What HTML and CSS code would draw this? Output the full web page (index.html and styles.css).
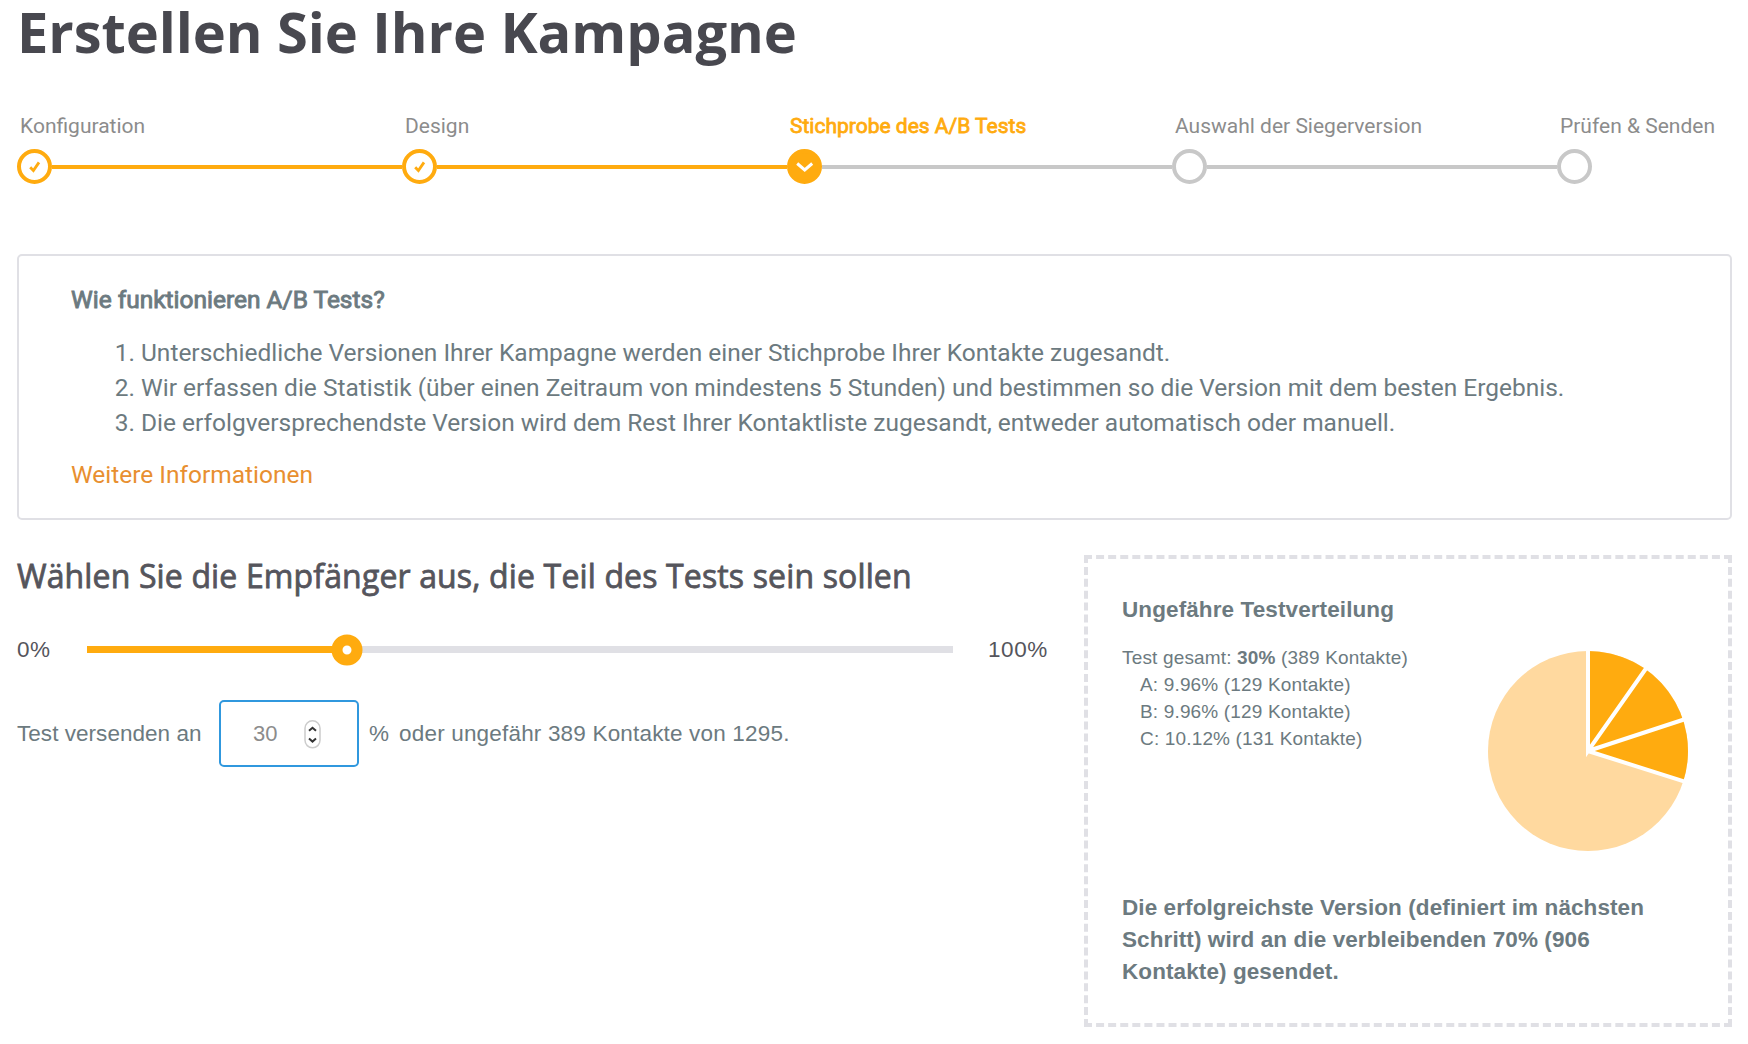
FILE: index.html
```html
<!DOCTYPE html>
<html lang="de">
<head>
    <meta charset="UTF-8">
    <meta name="viewport" content="width=device-width, initial-scale=1.0">
    <title>Erstellen Sie Ihre Kampagne</title>
    <link rel="stylesheet" href="styles.css">
</head>
<body>
    <h1 class="page-title">Erstellen Sie Ihre Kampagne</h1>

    <!-- Progress steps -->
    <div class="steps">
        <div class="step done">
            <span class="step-label">Konfiguration</span>
            <div class="step-track">
                <div class="dot"><svg width="12" height="12" viewBox="0 0 12 12"><path d="M1.2 6.3 L4.4 9.6 L10 1.4"/></svg></div>
            </div>
        </div>
        <div class="step done">
            <span class="step-label">Design</span>
            <div class="step-track">
                <div class="dot"><svg width="12" height="12" viewBox="0 0 12 12"><path d="M1.2 6.3 L4.4 9.6 L10 1.4"/></svg></div>
            </div>
        </div>
        <div class="step current">
            <span class="step-label">Stichprobe des A/B Tests</span>
            <div class="step-track">
                <div class="dot"><svg width="18" height="12" viewBox="0 0 18 12"><path d="M1.2 2.5 L8.7 9 L16.2 2.5"/></svg></div>
            </div>
        </div>
        <div class="step">
            <span class="step-label">Auswahl der Siegerversion</span>
            <div class="step-track"><div class="dot"></div></div>
        </div>
        <div class="step last">
            <span class="step-label">Prüfen &amp; Senden</span>
            <div class="step-track"><div class="dot"></div></div>
        </div>
    </div>

    <!-- Info box -->
    <div class="info-box">
        <h4>Wie funktionieren A/B Tests?</h4>
        <ol>
            <li>Unterschiedliche Versionen Ihrer Kampagne werden einer Stichprobe Ihrer Kontakte zugesandt.</li>
            <li>Wir erfassen die Statistik (über einen Zeitraum von mindestens 5 Stunden) und bestimmen so die Version mit dem besten Ergebnis.</li>
            <li>Die erfolgversprechendste Version wird dem Rest Ihrer Kontaktliste zugesandt, entweder automatisch oder manuell.</li>
        </ol>
        <a href="#">Weitere Informationen</a>
    </div>

    <div class="columns">
        <!-- Recipients -->
        <div class="recipients">
            <h2>Wählen Sie die Empfänger aus, die Teil des Tests sein sollen</h2>
            <div class="slider-row">
                <span class="slider-min">0%</span>
                <div class="slider">
                    <div class="slider-fill" style="width: 30%"></div>
                    <div class="slider-handle" style="left: 30%"></div>
                </div>
                <span class="slider-max">100%</span>
            </div>
            <div class="amount-row">
                <span class="amount-label">Test versenden an</span>
                <div class="amount-input">
                    <span>30</span>
                    <svg class="spinner" width="17" height="30" viewBox="0 0 17 30"><rect x="1" y="1.8" width="15" height="27" rx="7.5"/><path d="M5 11.8 L8.5 8.8 L12 11.8 M5 19.6 L8.5 22.6 L12 19.6"/></svg>
                </div>
                <span class="percent">%</span>
                <span class="amount-text">oder ungefähr 389 Kontakte von 1295.</span>
            </div>
        </div>

        <!-- Test distribution -->
        <div class="distribution">
            <h3>Ungefähre Testverteilung</h3>
            <div class="distribution-body">
                <div class="shares">
                    <p>Test gesamt: <b>30%</b> (389 Kontakte)</p>
                    <p class="version">A: 9.96% (129 Kontakte)</p>
                    <p class="version">B: 9.96% (129 Kontakte)</p>
                    <p class="version">C: 10.12% (131 Kontakte)</p>
                </div>
                <svg class="pie" width="200" height="200" viewBox="-100 -100 200 200">
                    <circle class="pie-rest" r="100"/>
                    <path class="pie-test" d="M0 0 L0 -100 A100 100 0 0 1 95.3 30.2 Z"/>
                    <path class="pie-gap" d="M0 -102 L0 0 L58 -82.5 M0 0 L97.5 -32 M0 0 L97.5 30.9"/>
                </svg>
            </div>
            <p class="winner">Die erfolgreichste Version (definiert im nächsten Schritt) wird an die verbleibenden 70% (906 Kontakte) gesendet.</p>
        </div>
    </div>
</body>
</html>
```
FILE: styles.css
```css
* {
    margin: 0;
    padding: 0;
    box-sizing: border-box;
}
body {
    font-family: "Liberation Sans", Arial, sans-serif;
    font-size: 22px;
    line-height: 32px;
    color: #6c7a80;
    background-color: #fff;
    padding: 1px 16px 0 17px;
}

.page-title {
    font-family: "Open Sans", sans-serif;
    font-size: 56px;
    line-height: 60px;
    font-weight: 700;
    letter-spacing: -0.06px;
    color: #48484f;
}

/* Progress steps */
.steps {
    display: grid;
    grid-template-columns: repeat(4, 385px) auto;
    margin-top: 53px;
}

.step-label {
    display: block;
    font-family: Roboto, sans-serif;
    font-size: 21px;
    line-height: 24px;
    color: #8c8c8c;
    padding-left: 3px;
    white-space: nowrap;
}

.step-track {
    display: flex;
    align-items: center;
    height: 35px;
    margin-top: 11px;
}

.step-track::after {
    content: "";
    flex: 1;
    height: 4px;
    background: #c8c8c8;
}

.dot {
    display: flex;
    align-items: center;
    justify-content: center;
    width: 35px;
    height: 35px;
    border: 4px solid #c8c8c8;
    border-radius: 50%;
}

.dot svg {
    fill: none;
    stroke: #ffab0f;
    stroke-width: 2.8;
}

.done .dot {
    border-color: #ffab0f;
}

.done .step-track::after {
    background: #ffab0f;
}

.current .dot {
    background: #ffab0f;
    border-color: #ffab0f;
}

.current .dot svg {
    stroke: #fff;
    stroke-width: 3;
}

.current .step-label {
    color: #ffab0f;
    -webkit-text-stroke: 0.8px #ffab0f;
}

.last .step-track::after {
    display: none;
}

/* Info box */
.info-box {
    margin-top: 70px;
    padding: 26px 52px 26px;
    border: 2px solid #e0e0e5;
    border-radius: 5px;
    font-family: Roboto, sans-serif;
    font-size: 24.48px;
    line-height: 35px;
}

.info-box h4 {
    font-size: 24.48px;
    font-weight: 400;
    -webkit-text-stroke: 0.9px #6c7a80;
}

.info-box ol {
    margin: 18px 0 17px;
    padding-left: 70px;
}

.info-box a {
    display: block;
    color: #e88f30;
    text-decoration: none;
}

/* Columns */
.columns {
    display: flex;
    justify-content: space-between;
    margin-top: 35px;
}

.recipients {
    width: 1031px;
    padding-top: 1px;
}

.recipients h2 {
    font-family: "Open Sans", sans-serif;
    font-size: 32px;
    line-height: 40px;
    font-weight: 400;
    letter-spacing: 0.14px;
    color: #55555c;
    -webkit-text-stroke: 0.8px #55555c;
    white-space: nowrap;
}

.slider-row {
    display: flex;
    align-items: center;
    margin-top: 37px;
    font-size: 22.5px;
    line-height: 33px;
    letter-spacing: 0.6px;
    color: #55555c;
}

.slider-min {
    width: 70px;
}

.slider {
    position: relative;
    width: 866px;
    height: 7px;
    background: #e0e0e5;
}

.slider-fill {
    height: 7px;
    background: #ffab0f;
}

.slider-handle {
    position: absolute;
    top: 50%;
    width: 31px;
    height: 31px;
    border: 11px solid #ffab0f;
    border-radius: 50%;
    background: #fff;
    transform: translate(-50%, -50%);
}

.slider-max {
    margin-left: 35px;
}

.amount-row {
    display: flex;
    align-items: center;
    margin-top: 34px;
    font-size: 22.5px;
    letter-spacing: 0.04px;
}

.amount-label {
    width: 202px;
}

.amount-input {
    display: flex;
    align-items: center;
    justify-content: space-between;
    width: 140px;
    height: 67px;
    padding: 0 36px 0 32px;
    border: 2px solid #3098de;
    border-radius: 5px;
    font-size: 22px;
    letter-spacing: 0;
    color: #8c8c8c;
}

.spinner rect {
    fill: #fff;
    stroke: #ccc;
    stroke-width: 1.5;
}

.spinner path {
    fill: none;
    stroke: #333;
    stroke-width: 2;
}

.percent {
    margin-left: 10px;
}

.amount-text {
    margin-left: 10px;
    letter-spacing: 0.18px;
}

/* Test distribution */
.distribution {
    width: 648px;
    height: 472px;
    padding: 35px 40px 0 34px;
    border: 4px dashed #e0e0e5;
}

.distribution h3 {
    font-size: 22.5px;
    letter-spacing: 0.1px;
}

.distribution-body {
    display: flex;
    justify-content: space-between;
    margin-top: 18px;
}

.shares {
    font-size: 19px;
    line-height: 27px;
    letter-spacing: 0.16px;
}

.version {
    padding-left: 18px;
}

.pie {
    margin-top: 7px;
}

.pie-rest {
    fill: #ffd99f;
}

.pie-test {
    fill: #ffab0f;
}

.pie-gap {
    fill: none;
    stroke: #fff;
    stroke-width: 4;
}

.winner {
    margin-top: 41px;
    font-size: 22.5px;
    font-weight: bold;
    letter-spacing: 0.09px;
}
```
